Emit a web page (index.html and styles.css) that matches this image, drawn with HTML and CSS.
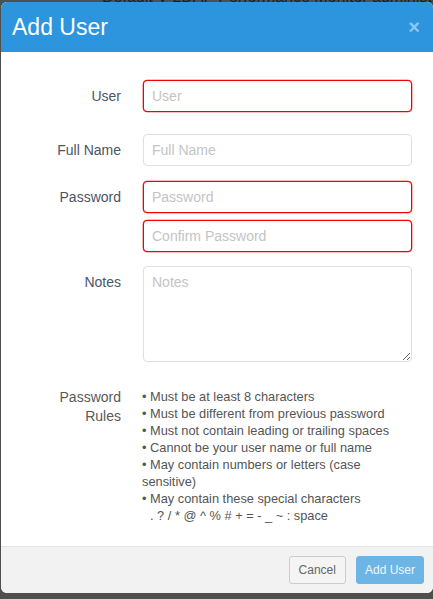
FILE: index.html
```
<!DOCTYPE html>
<html>
<head>
<meta charset="utf-8">
<link rel="stylesheet" href="styles.css">
</head>
<body>
<div class="backdrop-text">Default V LDAP Performance Monitor administrato</div>
<div class="modal">
  <div class="modal-header">
    <h1 class="modal-title">Add User</h1>
    <span class="close">×</span>
  </div>
  <div class="modal-body">
    <div class="row row-user">
      <label class="lbl">User</label>
      <input class="field invalid" type="text" placeholder="User">
    </div>
    <div class="row row-full">
      <label class="lbl">Full Name</label>
      <input class="field" type="text" placeholder="Full Name">
    </div>
    <div class="row row-pass">
      <label class="lbl">Password</label>
      <input class="field invalid" type="password" placeholder="Password">
    </div>
    <div class="row row-confirm">
      <span class="lbl"></span>
      <input class="field invalid" type="password" placeholder="Confirm Password">
    </div>
    <div class="row row-notes">
      <label class="lbl">Notes</label>
      <textarea class="field notes" placeholder="Notes"></textarea>
    </div>
    <div class="row row-rules">
      <div class="lbl rules-lbl">Password<br>Rules</div>
      <div class="rules">
        <div>• Must be at least 8 characters</div>
        <div>• Must be different from previous password</div>
        <div>• Must not contain leading or trailing spaces</div>
        <div>• Cannot be your user name or full name</div>
        <div>• May contain numbers or letters (case<br>sensitive)</div>
        <div>• May contain these special characters</div>
        <div class="chars">. ? / * @ ^ % # + = - _ ~ : space</div>
      </div>
    </div>
  </div>
  <div class="modal-footer">
    <button class="btn btn-cancel">Cancel</button>
    <button class="btn btn-primary">Add User</button>
  </div>
</div>
</body>
</html>
```
FILE: styles.css
```
html, body {
  margin: 0;
  padding: 0;
  height: 100%;
}
body {
  background: #4f4f4f;
  font-family: "Liberation Sans", Arial, sans-serif;
  overflow: hidden;
  position: relative;
}
.backdrop-text {
  position: absolute;
  left: 102px;
  right: 0;
  top: -12px;
  font-size: 16px;
  color: #1e1e1e;
  white-space: nowrap;
  overflow: hidden;
}
.modal {
  position: absolute;
  left: 1px;
  top: 2px;
  width: 432px;
  height: 591px;
  background: #fff;
  border-radius: 6px;
  overflow: hidden;
  display: flex;
  flex-direction: column;
}
.modal-header {
  height: 50px;
  background: #2d95dd;
  display: flex;
  align-items: center;
  justify-content: space-between;
  padding: 0 13px 0 11px;
  box-sizing: border-box;
  flex: none;
}
.modal-title {
  margin: 0;
  font-size: 23px;
  font-weight: normal;
  color: #fff;
  line-height: 1;
  padding-top: 1px;
}
.close {
  color: #8ec6ef;
  font-size: 20px;
  font-weight: bold;
  line-height: 1;
}
.modal-body {
  flex: 1;
  padding: 28px 21px 0 0;
}
.row {
  display: grid;
  grid-template-columns: 120px 1fr;
  column-gap: 22px;
  align-items: start;
}
.row-user { margin-bottom: 22px; }
.row-full { margin-bottom: 15px; }
.row-pass { margin-bottom: 7px; }
.row-confirm { margin-bottom: 14px; }
.row-notes { margin-bottom: 26px; }
.lbl {
  text-align: right;
  font-size: 14px;
  line-height: 32px;
  color: #4b5566;
}
.field {
  display: block;
  box-sizing: border-box;
  width: 100%;
  height: 32px;
  border: 1px solid #dfdfdf;
  border-radius: 4px;
  padding: 0 8px;
  font-family: "Liberation Sans", Arial, sans-serif;
  font-size: 14px;
  color: #333;
  outline: none;
  margin: 0;
}
.field::placeholder {
  color: #c4c4c4;
}
.field.invalid {
  border-color: #f20000;
  box-shadow: 0 0 0 0.3px #f20000;
}
.notes {
  height: 96px;
  padding-top: 7px;
  resize: vertical;
}
.rules-lbl {
  line-height: 19px;
  color: #5a5a5a;
}
.rules {
  font-size: 12.8px;
  line-height: 17px;
  color: #555;
  margin-left: -1px;
}
.chars {
  padding-left: 8px;
}
.modal-footer {
  flex: none;
  height: 47px;
  box-sizing: border-box;
  border-top: 1px solid #e3e3e3;
  background: #f2f2f2;
  display: flex;
  justify-content: flex-end;
  align-items: flex-start;
  gap: 10px;
  padding: 9px 9px 0 0;
}
.btn {
  height: 28px;
  box-sizing: border-box;
  font-family: "Liberation Sans", Arial, sans-serif;
  font-size: 12px;
  border-radius: 3px;
  padding: 0 9px;
  margin: 0;
}
.btn-cancel {
  background: #f4f4f4;
  border: 1px solid #cccccc;
  color: #666;
}
.btn-primary {
  background: #6db5e5;
  border: 1px solid #6db5e5;
  color: #eef6fc;
  padding: 0 8px;
}
```
